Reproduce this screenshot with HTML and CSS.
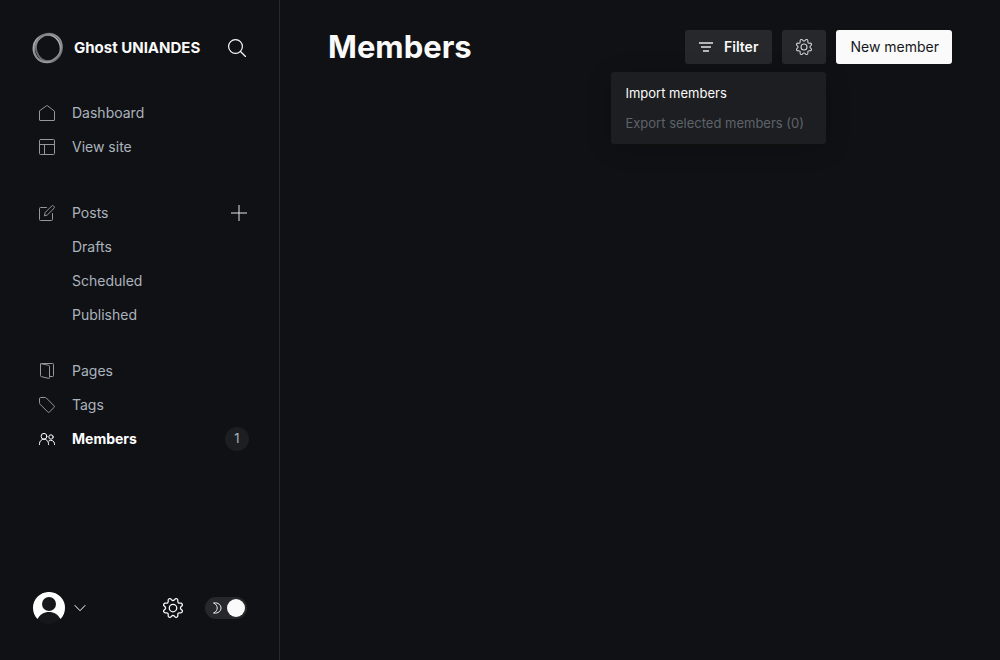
FILE: index.html
```html
<!DOCTYPE html>
<html lang="en">
<head>
<meta charset="utf-8">
<meta name="viewport" content="width=device-width, initial-scale=1">
<title>Members</title>
<link rel="stylesheet" href="styles.css">
</head>
<body>
<svg class="defs" aria-hidden="true">
  <symbol id="cog" viewBox="0 0 24 24">
    <path d="M10.546 2.438a1.957 1.957 0 0 0 2.908 0L14.4 1.4a1.959 1.959 0 0 1 3.41 1.413l-.071 1.4a1.958 1.958 0 0 0 2.051 2.054l1.4-.071A1.959 1.959 0 0 1 22.6 9.6l-1.04.945a1.958 1.958 0 0 0 0 2.909l1.04.945a1.959 1.959 0 0 1-1.413 3.406l-1.4-.071a1.958 1.958 0 0 0-2.056 2.056l.071 1.4A1.959 1.959 0 0 1 14.4 22.6l-.941-1.041a1.959 1.959 0 0 0-2.908 0L9.606 22.6A1.959 1.959 0 0 1 6.2 21.192l.072-1.4a1.958 1.958 0 0 0-2.056-2.056l-1.4.071A1.958 1.958 0 0 1 1.4 14.4l1.041-.945a1.958 1.958 0 0 0 0-2.909L1.4 9.606A1.958 1.958 0 0 1 2.809 6.2l1.4.071a1.957 1.957 0 0 0 2.058-2.06L6.2 2.81A1.959 1.959 0 0 1 9.606 1.4z"/>
    <circle cx="12" cy="12" r="4.5"/>
  </symbol>
</svg>
<div class="app">
  <nav class="sidebar" aria-label="Main">
    <header class="site">
      <svg class="site-logo" viewBox="0 0 32 32" aria-hidden="true">
        <ellipse cx="15" cy="16.5" rx="13.6" ry="13.8" stroke="#a9aaab" stroke-width="1.8"/>
        <ellipse cx="17" cy="15.5" rx="13" ry="13.8" stroke="#6d6f71" stroke-width="1.8"/>
        <ellipse cx="16" cy="16" rx="14.6" ry="12.6" stroke="#8b8d8f" stroke-width="1.6" transform="rotate(-45 16 16)"/>
      </svg>
      <span class="site-name">Ghost UNIANDES</span>
      <button class="icon-button search" aria-label="Search">
        <svg class="icon icon-search" viewBox="0 0 18 18"><circle cx="7.5" cy="7.5" r="6.9"/><path d="M12.5 12.5l5 5"/></svg>
      </button>
    </header>
    <ul class="menu">
      <li><a class="item" href="#dashboard"><svg class="icon" viewBox="0 0 16 16"><path d="M.5 6.2V15q0 .5.5.5h14q.5 0 .5-.5V6.2L8.4.7q-.4-.3-.8 0z"/></svg>Dashboard</a></li>
      <li><a class="item" href="#site"><svg class="icon" viewBox="0 0 16 16"><rect x=".5" y=".5" width="15" height="15" rx="1"/><path d="M.5 5.5h15M5.5 5.5v10"/></svg>View site</a></li>
    </ul>
    <ul class="menu menu-posts">
      <li class="row"><a class="item" href="#posts"><svg class="icon" viewBox="0 0 16 16"><path d="M7.5 2.5h-6q-1 0-1 1v11q0 1 1 1h11q1 0 1-1v-6M5.5 10.5l.7-3L12.7 1q.9-.9 1.8 0l.5.5q.9.9 0 1.8L8.5 9.8z"/></svg>Posts</a>
        <button class="icon-button add" aria-label="New post"><svg class="icon" viewBox="0 0 16 16"><path d="M8 0v16M0 8h16"/></svg></button></li>
      <li><a class="item sub" href="#drafts">Drafts</a></li>
      <li><a class="item sub" href="#scheduled">Scheduled</a></li>
      <li><a class="item sub" href="#published">Published</a></li>
    </ul>
    <ul class="menu">
      <li><a class="item" href="#pages"><svg class="icon" viewBox="0 0 16 16"><path d="M1.5 1.3q0-.8.8-.8h11.4q.8 0 .8.8v11.4q0 .8-.8.8h-3.2M2 .7l7.7 1.6q.8.2.8 1v11.4q0 .9-.8.7L2.2 13.6q-.7-.2-.7-1V1.3"/></svg>Pages</a></li>
      <li><a class="item" href="#tags"><svg class="icon" viewBox="0 0 16 16"><path d="M.5 1.5q0-1 1-1h4.7q.6 0 1.1.5l7.8 7.8q.8.8 0 1.6L10.4 15q-.8.8-1.6 0L1 7.2q-.5-.5-.5-1.1z"/></svg>Tags</a></li>
      <li class="row"><a class="item active" href="#members"><svg class="icon" viewBox="0 0 16 16"><circle cx="5" cy="5.3" r="2.9"/><path d="M.5 13.5v-.8a4.5 4.5 0 0 1 9 0v.8"/><circle cx="12" cy="6" r="2.2"/><path d="M9.9 9.9a3.6 3.6 0 0 1 5.6 2.8v.8"/></svg>Members</a>
        <span class="count">1</span></li>
    </ul>
    <footer class="foot">
      <button class="icon-button account" aria-label="Account">
        <svg class="avatar" viewBox="0 0 32 32"><circle cx="16" cy="16" r="16" fill="#15171a"/><path d="M4.5 27.1A16 16 0 1 1 27.5 27.1C25 22.500 21 20 16 20S7 22.5 4.5 27.1z" fill="#fff"/><circle cx="16" cy="12" r="7" fill="#15171a"/></svg>
        <svg class="chevron" viewBox="0 0 12 8"><path d="M.7 1.2L6 6.7l5.3-5.5"/></svg>
      </button>
      <a class="icon-button settings" href="#settings" aria-label="Settings"><svg class="icon icon-cog"><use href="#cog"/></svg></a>
      <label class="theme">
        <input class="theme-input" type="checkbox" role="switch" aria-label="Dark mode" checked>
        <svg class="moon" viewBox="0 0 10 12" aria-hidden="true"><path d="M1.5 1C11.5-.5 11.5 12.5 1.5 11C6.5 9 6.5 3 1.5 1z"/></svg>
      </label>
    </footer>
  </nav>
  <main class="main">
    <header class="head">
      <h1 class="title">Members</h1>
      <div class="actions">
        <button class="button filter"><svg class="bars" viewBox="0 0 14 10"><path d="M0 1h14M2 5h10M4 9h6"/></svg>Filter</button>
        <div class="dropdown">
          <button class="button cog" aria-label="Members actions" aria-expanded="true"><svg class="icon"><use href="#cog"/></svg></button>
          <div class="popup">
            <button class="option">Import members</button>
            <button class="option" disabled>Export selected members (0)</button>
          </div>
        </div>
        <button class="button primary">New member</button>
      </div>
    </header>
  </main>
</div>
</body>
</html>
```
FILE: styles.css
```css
* { box-sizing: border-box; }
body { margin: 0; background: #101114; color: #fafafa; font-family: Inter, "Liberation Sans", sans-serif; font-size: 14px; line-height: 16px; }
button { font: inherit; color: inherit; border: 0; padding: 0; background: none; cursor: pointer; }
a { color: inherit; text-decoration: none; }
.defs { display: none; }
.app { display: flex; min-height: 100vh; }

.sidebar { flex: 0 0 280px; display: flex; flex-direction: column; border-right: 1px solid #26282c; padding: 32px 32px 36px; }
.site { display: flex; align-items: center; height: 32px; margin-bottom: 32px; }
.site-logo { width: 32px; height: 32px; fill: none; }
.site-name { flex: 1; margin-left: 10px; font-size: 15px; font-weight: 700; white-space: nowrap; }
.icon { width: 16px; height: 16px; fill: none; stroke: currentColor; stroke-linecap: round; stroke-linejoin: round; flex: none; }
.icon-button { display: flex; align-items: center; }
.icon-search { width: 18px; height: 18px; stroke-width: 1.2; }

.menu { list-style: none; margin: 0 0 32px; padding: 0; }
.menu-posts { margin-bottom: 22px; }
.row { display: flex; align-items: center; }
.item { display: flex; flex: 1; align-items: center; gap: 17px; height: 34px; padding-left: 7px; font-size: 14px; color: #abb4be; }
.item .icon { stroke: #95989c; }
.sub { padding-left: 40px; }
.item.active { color: #fff; font-weight: 700; }
.active .icon { stroke: #fff; }
.add { color: #e5e5e6; }
.count { width: 24px; height: 24px; border-radius: 12px; margin-right: -2px; background: #1d1e21; color: #abb4be; font-size: 13px; line-height: 23px; text-align: center; }
.search { margin-right: 1px; }

.foot { display: flex; align-items: center; margin-top: auto; }
.account { gap: 9px; margin-right: auto; padding-left: 1px; }
.avatar { width: 32px; height: 32px; }
.chevron { width: 12px; height: 8px; fill: none; stroke: #fff; stroke-width: 1; }
.icon-cog { width: 20px; height: 20px; stroke-width: 1.5; }
.settings { margin-right: 22px; }
.theme { position: relative; }
.theme-input { appearance: none; display: block; width: 42px; height: 22px; margin: 0; padding: 2px; border-radius: 11px; background: #26282b; }
.theme-input::before { content: ""; display: block; width: 18px; height: 18px; border-radius: 50%; background: #fafafa; }
.theme-input:checked::before { margin-left: auto; }
.moon { position: absolute; left: 7px; top: 5px; width: 10px; height: 12px; fill: none; stroke: #eee; stroke-width: 1; }

.main { flex: 1; padding: 25px 48px; }
.head { display: flex; align-items: center; justify-content: space-between; min-height: 44px; }
.title { margin: 0; font-size: 31px; line-height: 42px; font-weight: 700; }
.actions { display: flex; gap: 10px; }
.button { display: flex; align-items: center; height: 34px; padding: 0 14px; border-radius: 3px; background: #26282b; font-size: 14px; }
.filter { gap: 11px; font-weight: 600; }
.bars { width: 14px; height: 10px; stroke: #b4b5b7; stroke-width: 2; }
.cog { color: #d0d1d2; }
.cog .icon { stroke-width: 1.6; }
.primary { padding-right: 13px; background: #fafafa; color: #15171a; }
.dropdown { position: relative; }
.popup { position: absolute; top: 42px; right: 0; display: grid; width: 215px; padding: 6px 0; border-radius: 3px; background: #1d1e21; box-shadow: 0 4px 24px rgba(0, 0, 0, .2); }
.option { height: 30px; padding: 0 14px; font-size: 13px; text-align: left; white-space: nowrap; }
.option:disabled { color: #5d636b; cursor: default; }
```
